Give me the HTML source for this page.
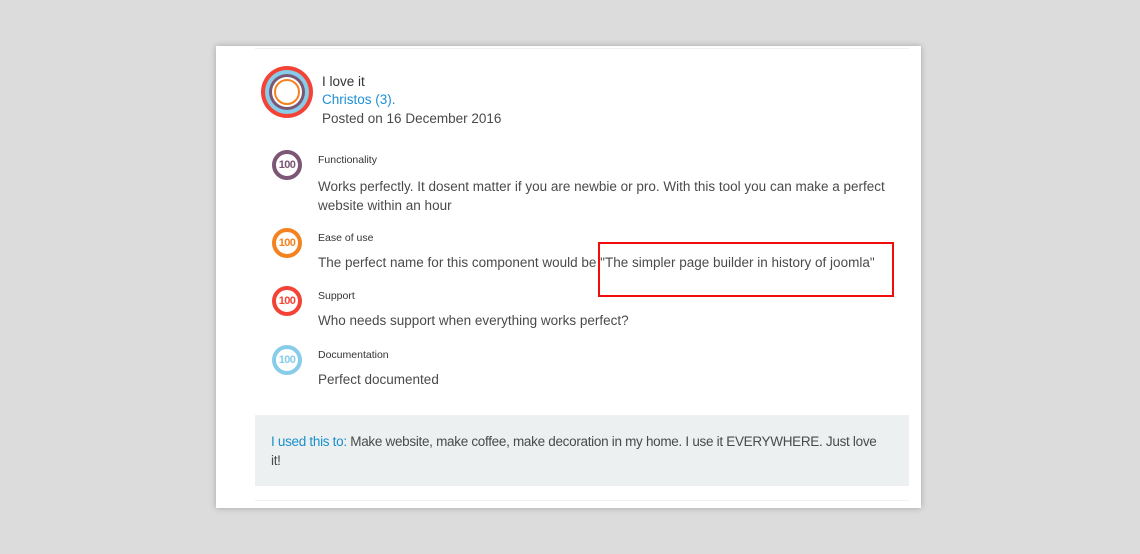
<!DOCTYPE html>
<html><head><style>
body{margin:0;width:1140px;height:554px;background:#dcdcdc;position:relative;overflow:hidden;font-family:"Liberation Sans",sans-serif;color:#444}
.card{position:absolute;left:216px;top:46px;width:705px;height:462px;background:#fff;box-shadow:0 0 6px rgba(0,0,0,.25)}
.t{position:absolute;white-space:nowrap}
.m{font-size:13.5px;color:#4a4a4a}
.s{font-size:10.5px;color:#333}
.b{position:absolute;width:30px;height:30px;border-radius:50%;box-sizing:border-box;border:4px solid;background:#fff;font-size:11px;font-weight:bold;text-align:center;line-height:22px;letter-spacing:-.6px}
</style></head><body>
<div class="card"></div>
<div style="position:absolute;left:255px;top:48px;width:654px;height:1px;background:#eef2f2"></div>
<div style="position:absolute;left:261px;top:66px;width:52px;height:52px;border-radius:50%;background:#f44336"></div>
<div style="position:absolute;left:265px;top:70px;width:44px;height:44px;border-radius:50%;background:#87cde9"></div>
<div style="position:absolute;left:269px;top:74px;width:36px;height:36px;border-radius:50%;background:#7b5675"></div>
<div style="position:absolute;left:272px;top:77px;width:30px;height:30px;border-radius:50%;background:#fff"></div>
<div style="position:absolute;left:274px;top:79px;width:26px;height:26px;border-radius:50%;box-sizing:border-box;border:2.5px solid #f58220"></div>
<div class="t m" style="left:322px;top:74px;color:#333">I love it</div>
<div class="t m" style="left:322px;top:92px;color:#1e8fd6">Christos (3).</div>
<div class="t m" style="left:322px;top:111px">Posted on 16 December 2016</div>

<div class="b" style="left:272px;top:150px;border-color:#7b5675;color:#7b5675">100</div>
<div class="t s" style="left:318px;top:154px">Functionality</div>
<div class="t m" style="left:318px;top:177px;line-height:19px">Works perfectly. It dosent matter if you are newbie or pro. With this tool you can make a perfect<br>website within an hour</div>

<div class="b" style="left:272px;top:228px;border-color:#f58220;color:#f58220">100</div>
<div class="t s" style="left:318px;top:232px">Ease of use</div>
<div class="t m" style="left:318px;top:255px">The perfect name for this component would be "The simpler page builder in history of joomla"</div>
<div style="position:absolute;left:598px;top:242px;width:292px;height:51px;border:2px solid #f20d0d"></div>

<div class="b" style="left:272px;top:286px;border-color:#f44336;color:#f44336">100</div>
<div class="t s" style="left:318px;top:290px">Support</div>
<div class="t m" style="left:318px;top:313px">Who needs support when everything works perfect?</div>

<div class="b" style="left:272px;top:345px;border-color:#87cde9;color:#87cde9">100</div>
<div class="t s" style="left:318px;top:349px">Documentation</div>
<div class="t m" style="left:318px;top:372px">Perfect documented</div>

<div style="position:absolute;left:255px;top:415px;width:654px;height:71px;background:#ecf0f1"></div>
<div class="t m" style="left:271px;top:432px;line-height:19px;letter-spacing:-0.3px"><span style="color:#1a8fc9">I used this to:</span> Make website, make coffee, make decoration in my home. I use it EVERYWHERE. Just love<br>it!</div>
<div style="position:absolute;left:255px;top:500px;width:654px;height:1px;background:#eef2f2"></div>
</body></html>
